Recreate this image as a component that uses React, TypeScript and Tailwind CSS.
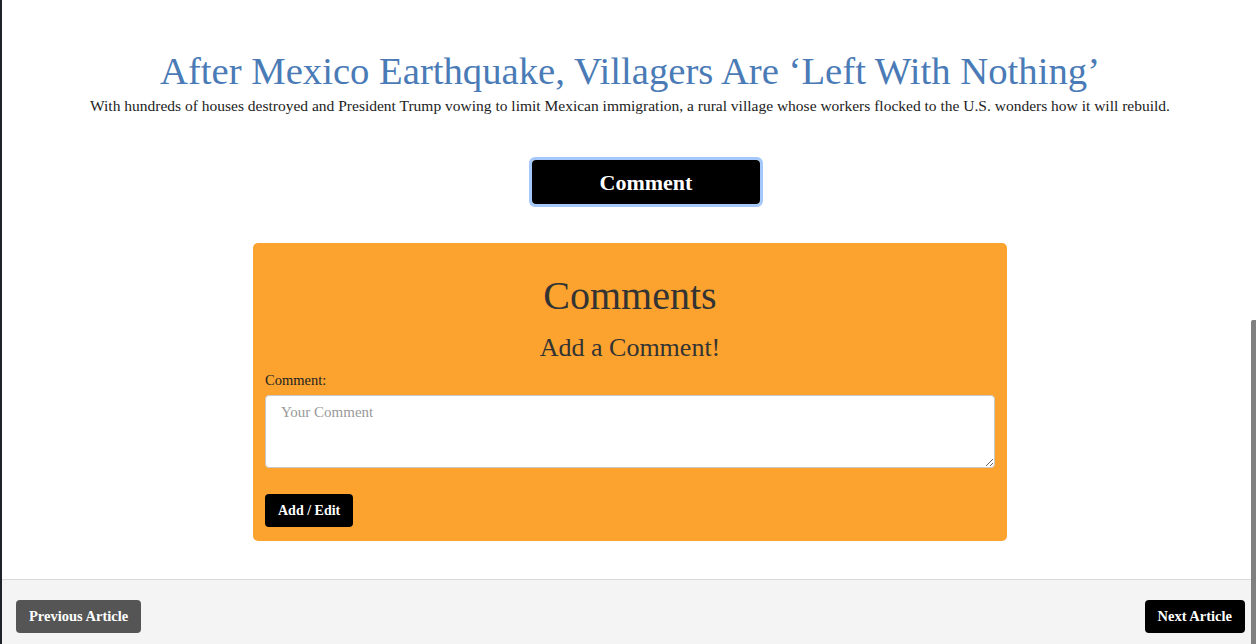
import React from "react";

export default function App() {
  const serif = { fontFamily: '"Liberation Serif", "DejaVu Serif", serif' };
  return (
    <div
      className="relative flex h-[644px] w-[1256px] flex-col overflow-hidden border-l-2 border-[#1d2329] bg-white"
      style={serif}
    >
      <main className="flex flex-1 flex-col items-center pl-[2px]">
        <h1 className="mt-[49px] text-center text-[38.7px] leading-[44px] text-[#4a7bb6]">
          After Mexico Earthquake, Villagers Are ‘Left With Nothing’
        </h1>
        <p className="mt-[3px] text-center text-[15.5px] leading-[20px] text-[#222]">
          With hundreds of houses destroyed and President Trump vowing to limit Mexican immigration, a rural village whose workers flocked to the U.S. wonders how it will rebuild.
        </p>
        <div className="ml-[32px] mt-[41px] rounded-[6px] border-[3px] border-[#a5c8fb]">
          <button className="h-[44px] w-[228px] rounded-[4px] bg-black text-[22px] font-bold text-white">
            Comment
          </button>
        </div>
        <section className="mt-[36px] w-[754px] rounded-[5px] bg-[#fca32f] px-[12px] pb-[14px] pt-[29px]">
          <h2 className="text-center text-[40px] leading-[48px] text-[#333]">Comments</h2>
          <h3 className="mt-[12px] text-center text-[26px] leading-[32px] text-[#333]">Add a Comment!</h3>
          <label className="mt-[6px] block text-[14.5px] leading-[20px] text-[#222]">Comment:</label>
          <textarea
            placeholder="Your Comment"
            className="mt-[5px] block h-[73px] w-full rounded-[4px] border border-[#c8c8c8] bg-white px-[15px] py-[6px] text-[15px] leading-[20px] placeholder:text-[#999]"
            style={serif}
          />
          <button className="mt-[26px] h-[33px] rounded-[4px] bg-black px-[13px] text-[14px] font-bold text-white">
            Add / Edit
          </button>
        </section>
      </main>
      <footer className="flex h-[65px] items-start justify-between border-t border-[#d9d9d9] bg-[#f4f4f4] pl-[14px] pr-[11px] pt-[20px]">
        <button className="h-[33px] rounded-[4px] bg-[#555] px-[13px] text-[14.5px] font-bold text-white">
          Previous Article
        </button>
        <button className="h-[33px] rounded-[4px] bg-black px-[13px] text-[14.5px] font-bold text-white">
          Next Article
        </button>
      </footer>
      <div className="absolute right-0 top-[320px] h-[324px] w-[5px] rounded-tl-[2px] bg-[#808080]" />
    </div>
  );
}
